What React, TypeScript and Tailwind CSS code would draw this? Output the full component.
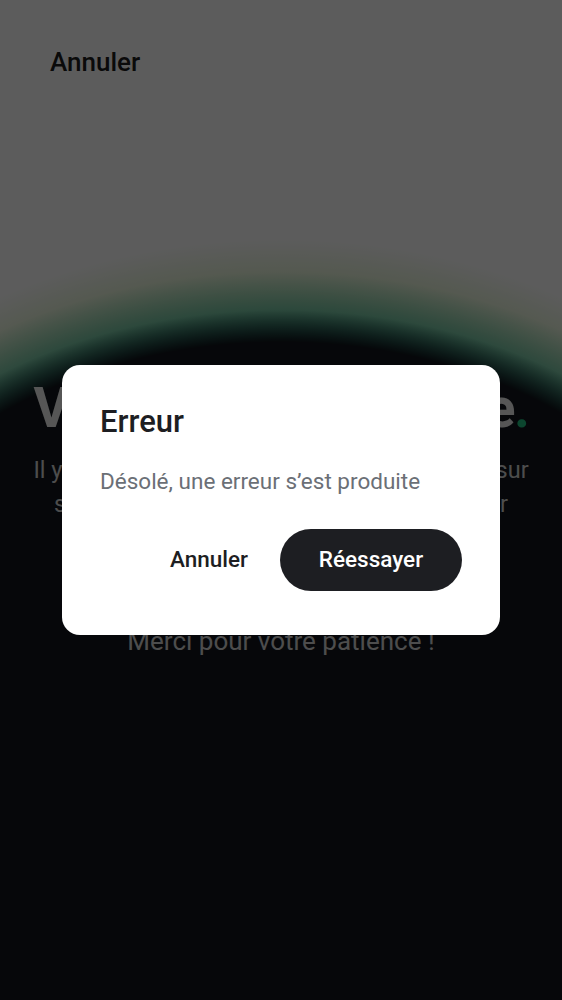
export default function App() {
  return (
    <div className="relative h-[1000px] w-full overflow-hidden bg-white font-[Roboto,sans-serif] bg-[image:linear-gradient(to_bottom,transparent_660px,#11161c_660px),radial-gradient(490px_354px_at_50%_664px,#11161c_91%,transparent_100%),radial-gradient(535px_392px_at_50%_664px,#0e9a90_78%,transparent_100%),radial-gradient(560px_425px_at_50%_664px,#b4e08c_74%,transparent_100%)]">
      <div className="pt-[46px] pl-[50px] text-[26px] font-medium leading-[32px] text-[#1c1c1c]">
        Annuler
      </div>

      <div className="flex flex-col items-center pt-[298px] text-center">
        <h1 className="whitespace-nowrap text-[55px] font-bold leading-[64px] tracking-tight text-[#ededed]">
          Vous êtes en attente<span className="text-[#22c383]">.</span>
        </h1>
        <p className="mt-[13px] whitespace-nowrap text-[23.5px] leading-[34px] text-[#d4d4d4]">
          Il y a actuellement beaucoup trop de monde sur
          <br />
          serveurs. Nous faisons de notre mieux pour
          <br />
          vous offrir la meilleure expérience.
        </p>
        <p className="mt-[69px] text-[26px] leading-[34px] text-[#d4d4d4]">
          Merci pour votre patience !
        </p>
      </div>

      <div className="fixed inset-0 flex items-center justify-center bg-black/[0.64]">
        <div className="w-[438px] rounded-[18px] bg-white px-[38px] pt-[38px] pb-[44px]">
          <h2 className="text-[31px] font-medium leading-[38px] text-[#1d1e22]">Erreur</h2>
          <p className="mt-[25px] text-[22.5px] leading-[30px] text-[#6b6f76]">
            Désolé, une erreur s’est produite
          </p>
          <div className="mt-[33px] flex items-center justify-end gap-[10px]">
            <button className="h-[62px] px-[22px] text-[22.5px] font-medium text-[#1d1e22]">
              Annuler
            </button>
            <button className="h-[62px] w-[182px] rounded-full bg-[#1d1e22] text-[22.5px] font-medium text-white">
              Réessayer
            </button>
          </div>
        </div>
      </div>
    </div>
  );
}
